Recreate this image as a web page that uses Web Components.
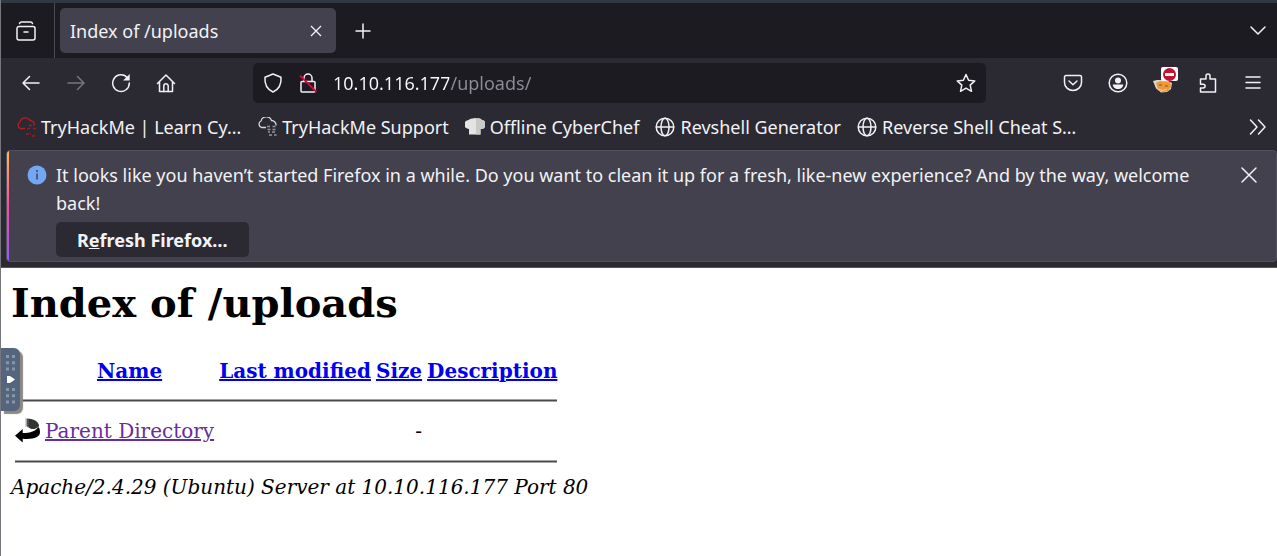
<!DOCTYPE html>
<html lang="en">
<head>
<meta charset="utf-8">
<title>Index of /uploads</title>
<style>
html, body { margin: 0; min-height: 100%; background: #fff; }
body { font: 18px/28px "Noto Sans", sans-serif; color: #f2f2f5; }
</style>
</head>
<body>
<browser-window>
  <tab-strip slot="chrome">Index of /uploads</tab-strip>
  <nav-bar slot="chrome"></nav-bar>
  <bookmark-bar slot="chrome">
    <bookmark-item icon="cloudred">TryHackMe | Learn Cy…</bookmark-item>
    <bookmark-item icon="cloud">TryHackMe Support</bookmark-item>
    <bookmark-item icon="chef">Offline CyberChef</bookmark-item>
    <bookmark-item icon="globe">Revshell Generator</bookmark-item>
    <bookmark-item icon="globe">Reverse Shell Cheat S…</bookmark-item>
  </bookmark-bar>
  <notice-bar slot="chrome">It looks like you haven’t started Firefox in a while. Do you want to clean it up for a fresh, like-new experience? And by the way, welcome back!</notice-bar>
  <directory-index></directory-index>
</browser-window>

<script>
const S = 'fill="none" stroke="currentColor" stroke-width="1.5" stroke-linecap="round" stroke-linejoin="round"';
const ICONS = {
  view: `<g ${S}><path d="M3 5.500h14a2 2 0 0 1 2 2V17a2 2 0 0 1-2 2H3a2 2 0 0 1-2-2V7.500a2 2 0 0 1 2-2zM8 11h4M3.500 2.500q.5-1.500 2-1.500h9q1.500 0 2 1.500"/></g>`,
  close: `<path fill="none" stroke="currentColor" stroke-width="1.300" d="M5 5l10 10M15 5L5 15"/>`,
  bigclose: `<path ${S} d="M3 3l14 14M17 3L3 17"/>`,
  plus: `<path ${S} d="M10 3v14M3 10h14"/>`,
  down: `<path ${S} d="M3 6l7 7 7-7"/>`,
  back: `<path ${S} d="M18 10H2M8.500 3.500L2 10l6.500 6.500"/>`,
  forward: `<path ${S} d="M2 10h16M11.500 3.500L18 10l-6.500 6.500"/>`,
  reload: `<path ${S} d="M16.500 5A8.300 8.300 0 1 0 18.300 10"/><path fill="currentColor" d="M18.700 1v6.600h-6.600z"/>`,
  home: `<g ${S}><path d="M1.500 10.500L10 2l8.500 8.500M3.500 9v9.500h13V9"/><path d="M7.800 18.500V13a2.200 2.200 0 0 1 4.400 0v5.500"/></g>`,
  shield: `<path ${S} d="M10 1l8 3.200c.5 6-1.500 11.800-8 14.800C3.500 16 1.500 10.200 2 4.200z"/>`,
  lock: `<g ${S}><path d="M6 8.500V5a4 4 0 0 1 8 0v3.500M4 8.500h12a1 1 0 0 1 1 1V18a1 1 0 0 1-1 1H4a1 1 0 0 1-1-1V9.500a1 1 0 0 1 1-1z"/></g><path d="M2 2.500L18.500 19" stroke="#e2003b" stroke-width="1.800"/>`,
  star: `<path ${S} d="M10 1.500l2.600 5.700 6.200.7-4.600 4.200 1.300 6.200-5.500-3.100-5.500 3.100 1.300-6.200L1.200 7.900l6.200-.7z"/>`,
  pocket: `<g ${S}><path d="M3 2.500h14a1.500 1.500 0 0 1 1.500 1.500V9.500a8.500 8 0 0 1-17 0V4A1.500 1.500 0 0 1 3 2.500z"/><path d="M6 8l4 3.700L14 8"/></g>`,
  account: `<circle cx="10" cy="10" r="8.800" ${S}/><circle cx="10" cy="7.500" r="3" fill="currentColor"/><path fill="currentColor" d="M4.800 11.500h10.400c0 2.500-2 4.500-5.200 4.500s-5.200-2-5.200-4.500z"/>`,
  puzzle: `<path ${S} d="M2.500 19v-4h2.700a1.900 1.900 0 0 0 0-3.800H2.500V6H8V3a2 2 0 0 1 4 0v3h5.500v13z"/>`,
  menu: `<path ${S} d="M3 4h14M3 9.500h14M3 15h14"/>`,
  more: `<path ${S} d="M2.500 3l6.500 7-6.500 7M10.500 3l6.500 7-6.500 7"/>`,
  info: `<circle cx="10" cy="10" r="9.500" fill="#73a7f3"/><path d="M10 8.500v6M10 5v2" stroke="#42414d" stroke-width="1.500"/>`,
  globe: `<g ${S}><circle cx="10" cy="10" r="8.800"/><ellipse cx="10" cy="10" rx="4" ry="8.800"/><path d="M1.500 10h17"/></g>`,
  cloud: `<g fill="none" stroke="#d6d6da" stroke-width="1.300"><path d="M9 10.500H4.500A3.500 3.500 0 0 1 4 4 5.500 5.500 0 0 1 14.500 3.500 4.500 4.500 0 0 1 19 8.500"/><path d="M10 9.500h4m1.500 0H19M10.500 12.500h3m2 0h4M11 15h2m2 0h4M12 18h3m2 0h2.500" stroke="#96959c" stroke-width="1.600" stroke-dasharray="3 1"/></g>`,
  cloudred: `<g fill="none" stroke="#b51f24" stroke-width="1.300"><path d="M9 11.500H4.500A3.500 3.500 0 0 1 4 5 5.500 5.500 0 0 1 14 3.500 4.500 4.500 0 0 1 18.500 8"/><path d="M13 8.500h5M11 11.500h3m3 0h3M10 17h5m1 2h4" stroke="#a01c22" stroke-dasharray="3 1"/></g>`,
  chef: `<path fill="#e4e4e4" d="M4 17.500v-5.500A4.500 4.500 0 0 1 3.500 3 5 5 0 0 1 8 1.500a4 4 0 0 1 4 0A4.500 4.500 0 0 1 17 3a4.500 4.500 0 0 1-1.500 9v5.500z"/><path fill="#c9c9c9" d="M11 17.500V1.200a4 4 0 0 1 1 .3A4.500 4.500 0 0 1 17 3a4.500 4.500 0 0 1-1.500 9v5.500z"/>`,
  fox: `<path fill="#ddd6cd" d="M0 8l4-1 9 0 6 3-1 6-4 3-6 .5-5-4z"/><path fill="#ee9838" d="M3 10l4-2 10 1 1 5-3 4-5 1-5-2z"/><path stroke="#8d5526" stroke-width="1.200" d="M6 12h3m3 1h3"/><path fill="none" stroke="#f5d0a2" d="M5 16q5 3 9 0"/>`
};

function define(name, html, setup) {
  const template = document.createElement('template');
  template.innerHTML = `<style>*{box-sizing:border-box}button{border:0;padding:0;background:none;color:inherit;font:inherit;display:grid;place-items:center}</style>` + html;
  customElements.define(name, class extends HTMLElement {
    connectedCallback() {
      if (this.shadowRoot) return;
      this.attachShadow({ mode: 'open' }).append(template.content.cloneNode(true));
      if (setup) setup(this);
    }
  });
}

define('ui-icon', `<style>:host{display:block;flex:none;width:20px;height:20px}svg{display:block;width:100%;height:100%}</style><svg viewBox="0 0 20 20" aria-hidden="true"></svg>`,
  el => { el.shadowRoot.querySelector('svg').innerHTML = ICONS[el.getAttribute('name')] || ''; });

define('browser-window', `<style>
:host{display:block;min-height:100vh;border-left:1px solid #77767c;background:#fff;position:relative}
header{background:#2b2a33;border-top:3px solid #2f3943;border-bottom:1px solid #55545e}
side-handle{position:absolute;left:0;top:348px}
</style><header><slot name="chrome"></slot></header><main><slot></slot></main><side-handle></side-handle>`);

define('tab-strip', `<style>
:host{display:flex;align-items:center;height:55px;background:#1c1b22;padding-right:9px}
.view{width:54px;height:100%;border-right:1px solid #4b4a53;padding-right:4px}
.tab{display:flex;align-items:center;justify-content:space-between;width:276px;height:45px;margin-left:5px;padding:0 10px;border-radius:5px;background:#42414d}
.new{width:36px;height:36px;margin:0 auto 0 9px}
</style>
<button class="view" aria-label="Firefox View"><ui-icon name="view"></ui-icon></button>
<div class="tab"><span><slot></slot></span><button aria-label="Close tab"><ui-icon name="close"></ui-icon></button></div>
<button class="new" aria-label="New tab"><ui-icon name="plus"></ui-icon></button>
<button aria-label="List all tabs"><ui-icon name="down"></ui-icon></button>`);

define('nav-bar', `<style>
:host{display:flex;align-items:center;height:50px;padding:0 14px 0 20px}
nav,.tools{display:flex;gap:25px}
.off{color:#76757e}
.url{display:flex;align-items:center;flex:1;height:40px;margin:0 77px;padding:0 10px;border-radius:5px;background:#1c1b22;gap:15px}
input{flex:1;min-width:0;border:0;padding:0;outline:0;font:inherit;color:#fbfbfe;background:linear-gradient(90deg,#fbfbfe 116px,#8e8d96 116px);-webkit-background-clip:text;background-clip:text;-webkit-text-fill-color:transparent}
.ext{position:relative}
.badge{position:absolute;left:8px;top:-6px;width:17px;height:14px;border-radius:2px;background:#fff;display:grid;place-items:center}
.badge i{display:grid;place-items:center;width:13px;height:13px;border-radius:50%;background:#c8102e}
.badge i::after{content:"";width:9px;height:3px;background:#fff}
</style>
<nav aria-label="Navigation"><button aria-label="Back"><ui-icon name="back"></ui-icon></button><button class="off" aria-label="Forward" disabled><ui-icon name="forward"></ui-icon></button><button aria-label="Reload"><ui-icon name="reload"></ui-icon></button><button aria-label="Home"><ui-icon name="home"></ui-icon></button></nav>
<div class="url"><ui-icon name="shield"></ui-icon><ui-icon name="lock"></ui-icon><input aria-label="Address" value="10.10.116.177/uploads/"><button aria-label="Bookmark this page"><ui-icon name="star"></ui-icon></button></div>
<div class="tools"><button aria-label="Save to Pocket"><ui-icon name="pocket"></ui-icon></button><button aria-label="Account"><ui-icon name="account"></ui-icon></button><button class="ext" aria-label="FoxyProxy"><ui-icon name="fox"></ui-icon><span class="badge"><i></i></span></button><button aria-label="Extensions"><ui-icon name="puzzle"></ui-icon></button><button aria-label="Menu"><ui-icon name="menu"></ui-icon></button></div>`);

define('bookmark-bar', `<style>
:host{display:flex;align-items:center;height:42px;padding:0 9px 5px 15px;box-sizing:border-box}
nav{display:flex;gap:16px;flex:1}
</style><nav aria-label="Bookmarks"><slot></slot></nav><button aria-label="More bookmarks"><ui-icon name="more"></ui-icon></button>`);

define('bookmark-item', `<style>
:host{display:block}a{display:flex;align-items:center;gap:5px;color:inherit;text-decoration:none;white-space:nowrap}
</style><a href="#"><slot></slot></a>`,
  el => {
    const icon = document.createElement('ui-icon');
    icon.setAttribute('name', el.getAttribute('icon'));
    el.shadowRoot.querySelector('a').prepend(icon);
  });

define('notice-bar', `<style>
:host{display:block;padding:0 0 5px 5px}
section{position:relative;display:flex;align-items:flex-start;border:1px solid #52515e;border-radius:4px;background:#42414d;padding:10px 17px 4px 20px;overflow:hidden}
section::before{content:"";position:absolute;left:0;top:0;bottom:0;width:2px;background:linear-gradient(#ffbd4f,#ff4aa2 50%,#9059ff)}
.body{flex:1;margin:0 32px 0 9px}
p{margin:0 0 5px}
ui-icon{margin-top:4px}
.refresh{height:35px;padding:0 21px;border-radius:5px;background:#2b2a33;font-weight:700}
</style>
<section role="status"><ui-icon name="info"></ui-icon><div class="body"><p><slot></slot></p><button class="refresh"><span>R<u>e</u>fresh Firefox…</span></button></div><button aria-label="Dismiss"><ui-icon name="bigclose"></ui-icon></button></section>`);

define('directory-index', `<style>
:host{display:block;padding:11px 10px;font:20px/24px "DejaVu Serif",serif;color:#000}
h1{font-size:40px;line-height:48px;margin:0 0 28px}
table{border-spacing:3px;border-collapse:separate}
th,td{padding:1px}
a{color:#0000ee}a.seen{color:#6a2c9c}
hr{margin:11px 0;height:3px;border:solid #a4a4a4;border-width:1px 0;background:#4a4a4a}
tfoot hr{margin-bottom:8px}
.dir{display:block;width:25px;height:26px}
.num{text-align:right}
address{font-style:italic}
</style>
<h1>Index of /uploads</h1>
<table><thead><tr><th></th><th><a href="#name">Name</a></th><th><a href="#modified">Last modified</a></th><th><a href="#size">Size</a></th><th><a href="#description">Description</a></th></tr>
<tr><th colspan="5"><hr></th></tr></thead>
<tbody><tr><td><svg class="dir" viewBox="0 0 26 26" aria-hidden="true"><path d="M0 18L8 11v4c8 0 14-2 16-6 1 0 2 2 2 5 0 6-8 8-18 7v4z"/><path d="M12 0c7 0 13 3 13 8-2 2-4 3-8 3l-5-3z" fill="#333"/><path d="M11 0v9m2.500-9v9" stroke="#aaa" stroke-dasharray="1 1"/></svg></td><td><a class="seen" href="#parent">Parent Directory</a></td><td>&nbsp;</td><td class="num">&nbsp; - </td><td>&nbsp;</td></tr></tbody>
<tfoot><tr><th colspan="5"><hr></th></tr></tfoot></table>
<address>Apache/2.4.29 (Ubuntu) Server at 10.10.116.177 Port 80</address>`);

define('side-handle', `<style>
:host{display:block}
button{width:19px;height:63px;border-radius:0 6px 6px 0;background:#54657d;box-shadow:3px 3px 1px #8b8985}
svg{display:block;width:19px;height:63px}
</style><button aria-label="Open control bar"><svg viewBox="0 0 19 63"><path d="M6.500 7v16M12.500 7v16M6.500 40v16M12.500 40v16" stroke="#8996a8" stroke-width="3" stroke-dasharray="3 3.300"/><path d="M6 28h3l5 3.500L9 35H6z" fill="#fff"/></svg></button>`);
</script>
</body>
</html>
